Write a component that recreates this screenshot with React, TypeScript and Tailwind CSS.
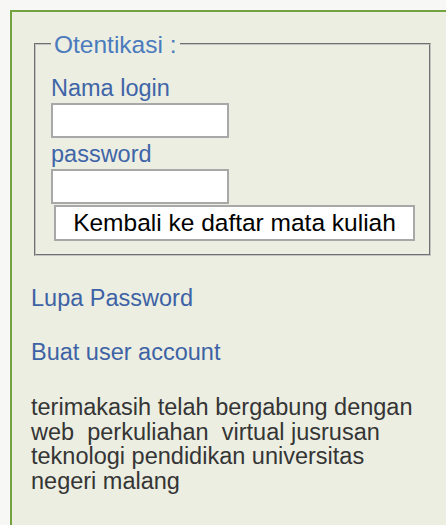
const FONT = "font-['Liberation_Sans','Arial',sans-serif]";

const Field = ({ label, first }: { label: string; first?: boolean }) => (
  <>
    <label className={`block text-[23.5px] leading-[24px] text-[#3f65a8] ${first ? "" : "mt-[4px]"}`}>
      {label}
    </label>
    <input
      type="text"
      className="mt-[3px] block h-[35px] w-[178px] border-2 border-[#a8a8a8] bg-white outline-none"
    />
  </>
);

export default function App() {
  return (
    <div className={`h-[525px] w-[446px] overflow-hidden bg-[#f7f7f6] pl-[10px] pt-[10px] ${FONT}`}>
      <div className="min-h-[600px] w-[460px] border-2 border-[#72a33e] bg-[#eceee2] pl-[19px] pt-[17px]">
        <fieldset className="ml-[3px] w-[397px] border-2 border-[#c4c4c4] pb-[13px] pl-[15px] pt-[18px] [border-style:groove]">
          <legend className="px-[3px] pt-[3px] text-[24.5px] leading-[26px] text-[#4b7bbd]">
            Otentikasi :
          </legend>
          <Field label="Nama login" first />
          <Field label="password" />
          <button
            type="button"
            className="ml-[3px] mt-[1px] block h-[36px] w-[361px] border-2 border-[#a8a8a8] bg-white text-center text-[24.5px] leading-[30px] text-black"
          >
            Kembali ke daftar mata kuliah
          </button>
        </fieldset>

        <a href="#" className="mt-[30px] block text-[23.5px] leading-[24px] text-[#3d62a5]">
          Lupa Password
        </a>
        <a href="#" className="mt-[30px] block text-[23.5px] leading-[24px] text-[#3d62a5]">
          Buat user account
        </a>

        <p className="mt-[31px] text-[23.5px] leading-[24.5px] text-[#353535]">
          terimakasih telah bergabung dengan
          <br />
          {"web\u00a0 perkuliahan\u00a0 virtual jusrusan"}
          <br />
          teknologi pendidikan universitas
          <br />
          negeri malang
        </p>
      </div>
    </div>
  );
}
